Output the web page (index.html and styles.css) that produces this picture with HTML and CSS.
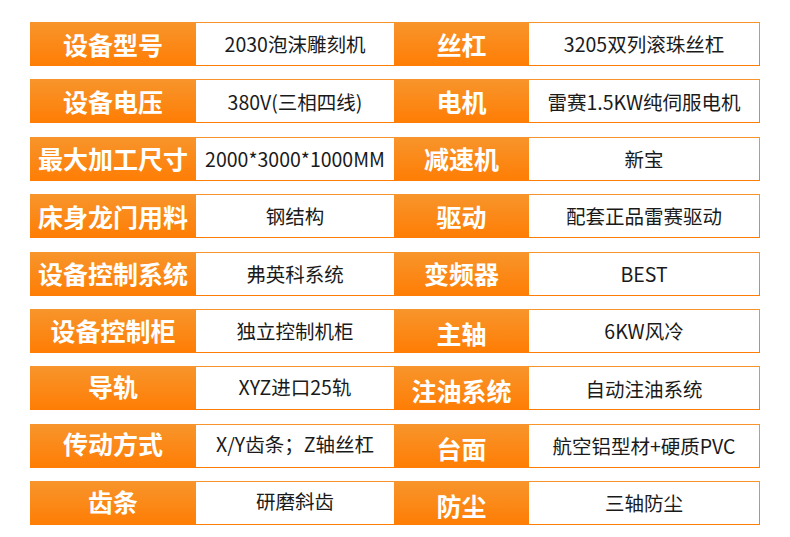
FILE: index.html
```html
<!DOCTYPE html>
<html lang="zh">
<head>
<meta charset="utf-8">
<link rel="stylesheet" href="styles.css">
</head>
<body>
<div class="table">
  <div class="row"><div class="lab">设备型号</div><div class="val">2030泡沫雕刻机</div><div class="lab lab2">丝杠</div><div class="val val2">3205双列滚珠丝杠</div></div>
  <div class="row"><div class="lab">设备电压</div><div class="val">380V(三相四线)</div><div class="lab lab2">电机</div><div class="val val2">雷赛1.5KW纯伺服电机</div></div>
  <div class="row"><div class="lab">最大加工尺寸</div><div class="val">2000*3000*1000MM</div><div class="lab lab2">减速机</div><div class="val val2">新宝</div></div>
  <div class="row"><div class="lab">床身龙门用料</div><div class="val">钢结构</div><div class="lab lab2">驱动</div><div class="val val2">配套正品雷赛驱动</div></div>
  <div class="row"><div class="lab">设备控制系统</div><div class="val">弗英科系统</div><div class="lab lab2">变频器</div><div class="val val2">BEST</div></div>
  <div class="row"><div class="lab">设备控制柜</div><div class="val">独立控制机柜</div><div class="lab lab2 low">主轴</div><div class="val val2">6KW风冷</div></div>
  <div class="row"><div class="lab up">导轨</div><div class="val up">XYZ进口25轨</div><div class="lab lab2 low">注油系统</div><div class="val val2">自动注油系统</div></div>
  <div class="row"><div class="lab up">传动方式</div><div class="val up">X/Y齿条；Z轴丝杠</div><div class="lab lab2 low">台面</div><div class="val val2">航空铝型材+硬质PVC</div></div>
  <div class="row"><div class="lab up">齿条</div><div class="val up">研磨斜齿</div><div class="lab lab2 low">防尘</div><div class="val val2">三轴防尘</div></div>
</div>
</body>
</html>
```
FILE: styles.css
```css
html, body {
  margin: 0;
  padding: 0;
  background: #ffffff;
}
body {
  width: 790px;
  height: 537px;
  overflow: hidden;
  font-family: "Noto Sans CJK SC", "Noto Sans", sans-serif;
}
.table {
  padding: 22px 0 0 30px;
  display: flex;
  flex-direction: column;
  gap: 13.4px;
}
.row {
  display: flex;
  width: 730px;
  height: 44px;
  background: linear-gradient(#f7952c, #ff7d04);
}
.lab {
  width: 166px;
  flex: none;
  display: flex;
  align-items: center;
  justify-content: center;
  color: #ffffff;
  font-size: 25px;
  font-weight: 700;
  line-height: 1;
}
.lab2 {
  width: 135px;
}
.val {
  width: 198px;
  flex: none;
  margin: 1px 0;
  background: #ffffff;
  display: flex;
  align-items: center;
  justify-content: center;
  color: #1a1a1a;
  font-size: 19.5px;
  line-height: 1;
  white-space: nowrap;
}
.val2 {
  width: 230px;
}
.low {
  padding-top: 5px;
  box-sizing: border-box;
}
.up {
  padding-bottom: 4px;
  box-sizing: border-box;
}
```
